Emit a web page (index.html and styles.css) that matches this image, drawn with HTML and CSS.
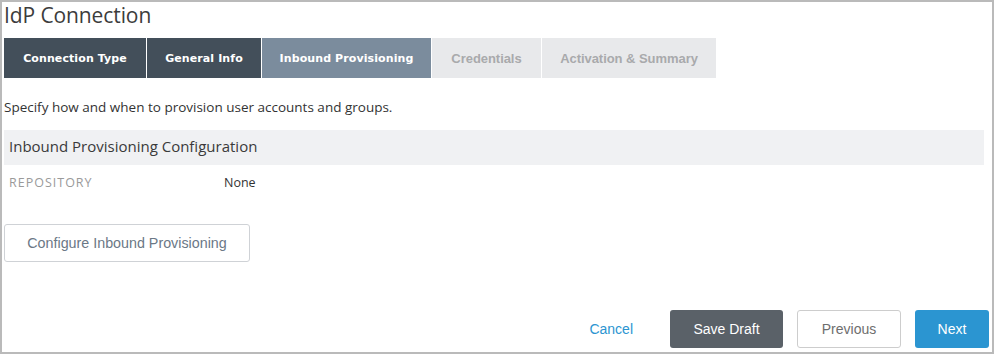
FILE: index.html
```html
<html>

<head>
  <meta charset="utf-8" />
  <link rel="stylesheet" href="styles.css">
</head>

<body>
  <div class="frame">
    <h1 class="title">IdP Connection</h1>

    <div class="steps">
      <div class="step done">Connection Type</div>
      <div class="step done">General Info</div>
      <div class="step active">Inbound Provisioning</div>
      <div class="step todo">Credentials</div>
      <div class="step todo">Activation &amp; Summary</div>
    </div>

    <p class="intro">Specify how and when to provision user accounts and groups.</p>

    <div class="section">
      <div class="section-head">Inbound Provisioning Configuration</div>
      <div class="field">
        <span class="label">REPOSITORY</span>
        <span class="value">None</span>
      </div>
    </div>

    <button class="btn-config">Configure Inbound Provisioning</button>

    <div class="footer">
      <a class="cancel" href="#">Cancel</a>
      <button class="btn btn-draft">Save Draft</button>
      <button class="btn btn-prev">Previous</button>
      <button class="btn btn-next">Next</button>
    </div>
  </div>
</body>

</html>
```

FILE: styles.css
```css
html,
body {
  margin: 0;
  padding: 0;
  background-color: #fff;
}

body {
  font-family: 'Open Sans', 'Liberation Sans', sans-serif;
  color: #333;
}

.frame {
  box-sizing: border-box;
  width: 994px;
  height: 354px;
  border: 2px solid #bababa;
  padding: 0 8px 0 2px;
  display: flex;
  flex-direction: column;
}

.title {
  margin: 0;
  height: 36px;
  font-size: 21px;
  font-weight: 400;
  line-height: 27px;
  color: #3c3c3c;
  letter-spacing: -0.1px;
}

.steps {
  display: flex;
  height: 40px;
}

.step {
  display: flex;
  align-items: center;
  justify-content: center;
  box-sizing: border-box;
  height: 40px;
  margin-right: 1px;
  font-family: 'DejaVu Sans', sans-serif;
  font-size: 11px;
  font-weight: bold;
  letter-spacing: 0.1px;
}

.step:nth-child(1) { width: 142px; }
.step:nth-child(2) { width: 114px; }
.step:nth-child(3) { width: 169px; }
.step:nth-child(4) { width: 109px; }
.step:nth-child(5) { width: 174px; }

.done {
  background-color: #434f5a;
  color: #fff;
}

.active {
  background-color: #7b8c9d;
  color: #fff;
}

.todo {
  background-color: #e8e9eb;
  color: #a9aaac;
  font-family: 'Liberation Sans', sans-serif;
  font-size: 13px;
  letter-spacing: -0.05px;
}

.intro {
  margin: 20px 0 0;
  font-size: 13.5px;
  line-height: 18px;
  color: #333;
}

.section {
  margin-top: 14px;
}

.section-head {
  height: 35px;
  line-height: 33px;
  padding-left: 5px;
  background-color: #f0f1f3;
  font-size: 15px;
  color: #3a3a3a;
}

.field {
  display: flex;
  height: 34px;
  align-items: center;
  padding-left: 5px;
  font-size: 12.5px;
}

.label {
  width: 215px;
  color: #9a9a9a;
  letter-spacing: 1px;
}

.value {
  color: #333;
}

.btn-config {
  align-self: flex-start;
  margin-top: 25px;
  width: 246px;
  height: 38px;
  background-color: #fff;
  border: 1px solid #cfd2d6;
  border-radius: 3px;
  font-family: 'Liberation Sans', sans-serif;
  font-size: 14.3px;
  color: #6b7886;
}

.footer {
  margin-top: auto;
  margin-bottom: 4px;
  display: flex;
  justify-content: flex-end;
  align-items: center;
  margin-right: -5px;
}

.cancel {
  margin-right: 37px;
  font-family: 'Liberation Sans', sans-serif;
  font-size: 14px;
  color: #2b95d1;
  text-decoration: none;
}

.btn {
  height: 38px;
  border-radius: 3px;
  font-family: 'Liberation Sans', sans-serif;
  font-size: 14px;
  border: 1px solid transparent;
  margin-left: 14px;
}

.btn-draft {
  width: 113px;
  background-color: #5a6168;
  color: #fff;
  margin-left: 0;
}

.btn-prev {
  width: 104px;
  background-color: #fff;
  border-color: #cdcdcd;
  color: #6e6e6e;
}

.btn-next {
  width: 74px;
  background-color: #2b95d1;
  color: #fff;
}
```
